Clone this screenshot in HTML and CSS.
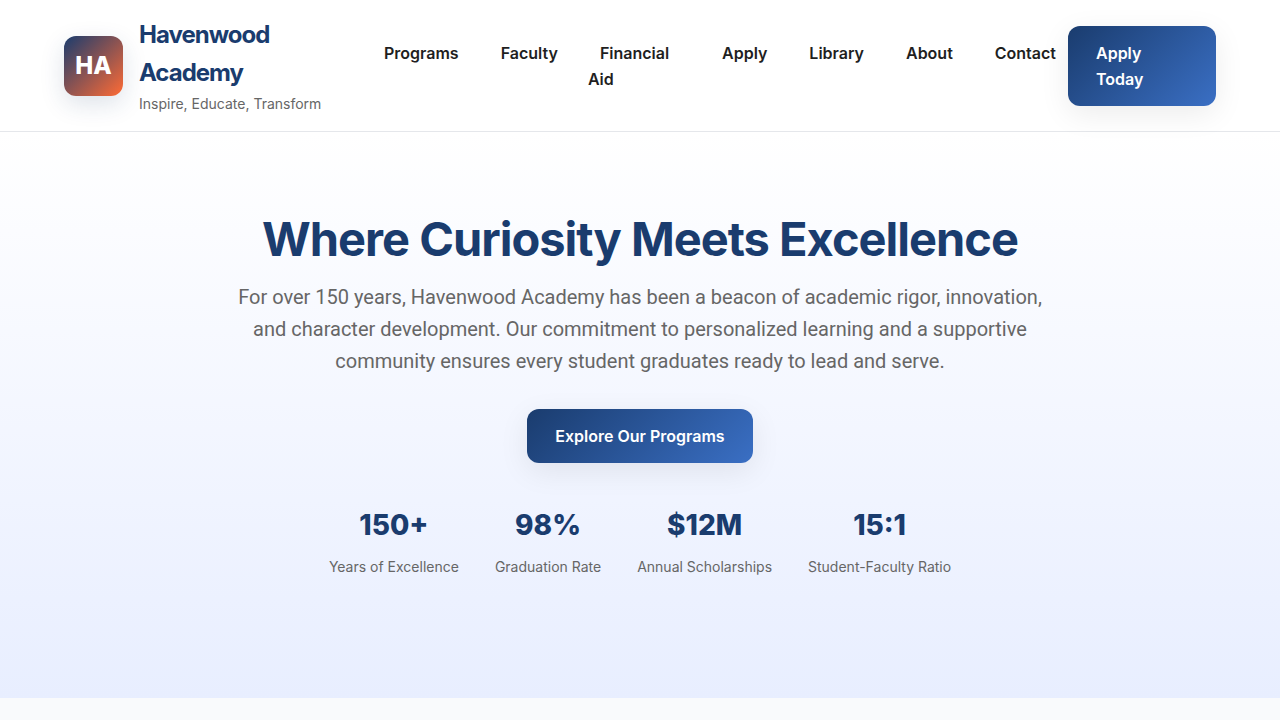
FILE: index.html
```html
<!DOCTYPE html>
<html lang="en">
<head>
<meta charset="utf-8">
<meta name="viewport" content="width=device-width, initial-scale=1">
<title>Havenwood Academy</title>
<link rel="stylesheet" href="styles.css">
</head>
<body>
<header class="site-header">
  <div class="brand">
    <div class="logo">HA</div>
    <div class="brand-text">
      <div class="brand-name">Havenwood Academy</div>
      <div class="tagline">Inspire, Educate, Transform</div>
    </div>
  </div>
  <nav class="nav" aria-label="Main">
    <ul class="nav-list">
      <li><a class="nav-link" href="#programs">Programs</a></li>
      <li><a class="nav-link" href="#faculty">Faculty</a></li>
      <li class="nav-item-wide"><a class="nav-link" href="#aid">Financial Aid</a></li>
      <li><a class="nav-link" href="#apply">Apply</a></li>
      <li><a class="nav-link" href="#library">Library</a></li>
      <li><a class="nav-link" href="#about">About</a></li>
      <li><a class="nav-link" href="#contact">Contact</a></li>
    </ul>
  </nav>
  <button class="button header-button" type="button">Apply Today</button>
</header>
<main>
  <section class="hero">
    <h1 class="hero-title">Where Curiosity Meets Excellence</h1>
    <p class="hero-text">For over 150 years, Havenwood Academy has been a beacon of academic rigor, innovation, and character development. Our commitment to personalized learning and a supportive community ensures every student graduates ready to lead and serve.</p>
    <button class="button" type="button">Explore Our Programs</button>
    <div class="stats">
      <div class="stat"><div class="stat-value">150+</div><div class="stat-label">Years of Excellence</div></div>
      <div class="stat"><div class="stat-value">98%</div><div class="stat-label">Graduation Rate</div></div>
      <div class="stat"><div class="stat-value">$12M</div><div class="stat-label">Annual Scholarships</div></div>
      <div class="stat"><div class="stat-value">15:1</div><div class="stat-label">Student-Faculty Ratio</div></div>
    </div>
  </section>
</main>
</body>
</html>
```
FILE: styles.css
```css
* {
  box-sizing: border-box;
  margin: 0;
  padding: 0;
}

body {
  font-family: Inter, "Liberation Sans", sans-serif;
  font-size: 16px;
  line-height: 26px;
  color: #1f1f1f;
  background: #f9fafc;
}

.site-header {
  position: relative;
  z-index: 1;
  display: flex;
  align-items: center;
  padding: 16px 64px;
  background: #fff;
  border-bottom: 1px solid #e5e7eb;
}

.brand {
  display: flex;
  flex: 0 0 308px;
  align-items: center;
  gap: 16px;
}

.logo {
  display: flex;
  flex: none;
  align-items: center;
  justify-content: center;
  width: 59px;
  height: 60px;
  border-radius: 12px;
  background: linear-gradient(135deg, #1a3c6e, #ff6b35);
  box-shadow: 0 8px 24px rgba(26, 60, 110, 0.15);
  color: #fff;
  font-size: 24px;
  font-weight: 800;
}

.brand-text {
  max-width: 192px;
}

.brand-name {
  color: #1a3c6e;
  font-size: 24px;
  font-weight: 700;
  line-height: 38px;
  letter-spacing: -1px;
}

.tagline {
  color: #666;
  font-size: 14px;
  line-height: 23px;
  white-space: nowrap;
}

.nav {
  flex: 1;
}

.nav-list {
  display: flex;
  gap: 18px;
  list-style: none;
}

.nav-item-wide {
  flex: 1;
  max-width: 113px;
}

.nav-link {
  padding: 8px 12px;
  color: #1f1f1f;
  font-weight: 600;
  text-decoration: none;
}

.button {
  padding: 14px 28px;
  border: 0;
  border-radius: 12px;
  background: linear-gradient(135deg, #1a3c6e, #3a6fc4);
  box-shadow: 0 8px 30px rgba(0, 0, 0, 0.08);
  color: #fff;
  font: inherit;
  font-weight: 600;
  text-align: left;
  cursor: pointer;
}

.header-button {
  flex: none;
  width: 148px;
}

.hero {
  padding: 80px 64px 120px;
  background: linear-gradient(180deg, #fff, #e8eeff);
  text-align: center;
}

.hero-title {
  margin-bottom: 16px;
  color: #1a3c6e;
  font-size: 47px;
  font-weight: 700;
  line-height: 53px;
  letter-spacing: -1px;
}

.hero-text {
  max-width: 820px;
  margin: 0 auto 32px;
  color: #666;
  font-family: Roboto, Inter, sans-serif;
  font-size: 20px;
  line-height: 32px;
}

.stats {
  display: flex;
  flex-wrap: wrap;
  justify-content: center;
  gap: 36px;
  margin-top: 40px;
}

.stat-value {
  margin-bottom: 7px;
  color: #1a3c6e;
  font-size: 28px;
  font-weight: 800;
  line-height: 45px;
}

.stat-label {
  color: #666;
  font-size: 14px;
  line-height: 23px;
}

@media (max-width: 1100px) {
  .site-header {
    flex-wrap: wrap;
    justify-content: space-between;
    gap: 16px;
    padding: 16px 24px;
  }

  .nav {
    flex: 1 0 100%;
    order: 1;
  }

  .nav-list {
    flex-wrap: wrap;
  }

  .nav-item-wide {
    flex: none;
    max-width: none;
  }

  .hero {
    padding: 64px 24px;
  }
}
```
